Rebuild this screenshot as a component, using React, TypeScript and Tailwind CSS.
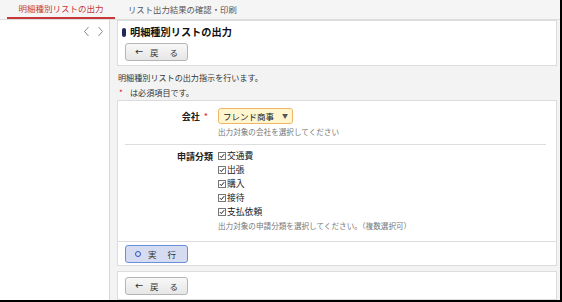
import React from "react";

const font = { fontFamily: '"Noto Sans CJK JP", "Noto Sans", sans-serif' };

function Check({ label }: { label: string }) {
  return (
    <div className="flex items-center h-[14px]">
      <span className="w-[8px] h-[8px] border border-[#777] bg-white flex items-center justify-center">
        <svg width="8" height="8" viewBox="0 0 8 8">
          <path d="M1.2 4.2 L3.1 6.1 L6.9 1.6" stroke="#111" strokeWidth="1.3" fill="none" />
        </svg>
      </span>
      <span className="ml-[1px] text-[8.8px] text-[#1a1a1a] leading-none">{label}</span>
    </div>
  );
}

function BackButton() {
  return (
    <div className="w-[63px] h-[18px] rounded-[3px] border border-[#b5b5b5] bg-gradient-to-b from-[#f8f8f8] to-[#e6e6e6] flex items-center text-[8.5px] text-[#333] leading-none">
      <span className="ml-[9px] text-[8px] font-bold">←</span>
      <span className="ml-[7px]">戻</span>
      <span className="ml-[11px]">る</span>
    </div>
  );
}

export default function App() {
  return (
    <div className="w-[562px] h-[302px] overflow-hidden bg-white border-r-[2px] border-b-[2px] border-black flex flex-col" style={font}>
      {/* tab bar */}
      <div className="h-[20px] shrink-0 bg-[#f5f5f5] border-b border-[#dedede] flex items-stretch">
        <div className="ml-[7px] w-[108px] border-b-[2px] border-[#c8383a] flex items-center justify-center text-[8.5px] text-[#c8383a] leading-none">
          明細種別リストの出力
        </div>
        <div className="ml-[13px] flex items-center text-[8.4px] text-[#555] leading-none">
          リスト出力結果の確認・印刷
        </div>
      </div>
      <div className="flex flex-1 min-h-0">
        {/* sidebar */}
        <div className="w-[110px] shrink-0 border-r border-[#d8d8d8] bg-white flex justify-end pt-[6px] pr-[5px]">
          <div className="flex items-start gap-[7px] h-[11px]">
            <svg width="7" height="11" viewBox="0 0 7 11">
              <path d="M5.5 1 L1.5 5.5 L5.5 10" stroke="#888" strokeWidth="1" fill="none" />
            </svg>
            <svg width="7" height="11" viewBox="0 0 7 11">
              <path d="M1.5 1 L5.5 5.5 L1.5 10" stroke="#888" strokeWidth="1" fill="none" />
            </svg>
          </div>
        </div>
        {/* main */}
        <div className="flex-1 bg-[#f3f3f3] pl-[7px] pr-[3px] flex flex-col">
          {/* panel 1 */}
          <div className="h-[46px] bg-white border border-[#dcdcdc] flex flex-col pl-[4px]">
            <div className="flex items-center h-[20px] mt-[1px]">
              <span className="w-[4px] h-[9px] rounded-full bg-[#1f2a55]" />
              <span className="ml-[4px] text-[10.2px] font-bold text-[#111] leading-none">明細種別リストの出力</span>
            </div>
            <div className="mt-[1px] ml-[3px]">
              <BackButton />
            </div>
          </div>
          {/* info text */}
          <div className="mt-[4px] text-[8.1px] text-[#333] leading-[15px] pl-[1px]">
            <div>明細種別リストの出力指示を行います。</div>
            <div className="flex">
              <span className="text-[#e02020] w-[12px] pl-[1px]">*</span>
              <span>は必須項目です。</span>
            </div>
          </div>
          {/* panel 2 */}
          <div className="h-[166px] bg-white border border-[#dcdcdc] flex flex-col">
            <div className="pt-[7px] px-[7px] pr-[10px]">
              <div className="flex">
                <div className="w-[88px] shrink-0 flex justify-end items-center h-[16px] text-[9px] font-bold text-[#222] leading-none">
                  会社<span className="text-[#e02020] ml-[4px] font-normal">*</span>
                  <span className="w-[5px]" />
                </div>
                <div className="ml-[5px] flex flex-col">
                  <div className="w-[75px] h-[16px] rounded-[3px] border border-[#f0b866] bg-[#fff6cf] flex items-center justify-between px-[4px] text-[8.5px] text-[#222] leading-none">
                    <span>フレンド商事</span>
                    <span className="text-[6px] text-[#555]">▼</span>
                  </div>
                  <div className="h-[13px] mt-[1px] flex items-center text-[7.6px] text-[#777] leading-none">出力対象の会社を選択してください</div>
                </div>
              </div>
              <div className="mt-[6px] border-t border-[#dddddd]" />
              <div className="flex pt-[4px]">
                <div className="w-[88px] shrink-0 flex justify-end items-center h-[14px] text-[9px] font-bold text-[#222] leading-none">
                  申請分類
                </div>
                <div className="ml-[5px] flex flex-col">
                  <Check label="交通費" />
                  <Check label="出張" />
                  <Check label="購入" />
                  <Check label="接待" />
                  <Check label="支払依頼" />
                  <div className="h-[14px] flex items-center text-[7.6px] text-[#777] leading-none">出力対象の申請分類を選択してください。（複数選択可）</div>
                </div>
              </div>
            </div>
            <div className="mt-auto h-[24px] border-t border-[#dddddd] pt-[3px] pl-[7px]">
              <div className="w-[63px] h-[18px] rounded-[3px] border border-[#6b8ed8] bg-[#d5dcf2] flex items-center text-[8.5px] text-[#333] leading-none">
                <span className="ml-[9px] w-[6px] h-[6px] rounded-full border-[1.5px] border-[#2c52c8]" />
                <span className="ml-[7px]">実</span>
                <span className="ml-[11px]">行</span>
              </div>
            </div>
          </div>
          {/* panel 3 */}
          <div className="mt-[5px] flex-1 bg-white border border-[#dcdcdc] pt-[5px] pl-[7px]">
            <BackButton />
          </div>
        </div>
      </div>
    </div>
  );
}
